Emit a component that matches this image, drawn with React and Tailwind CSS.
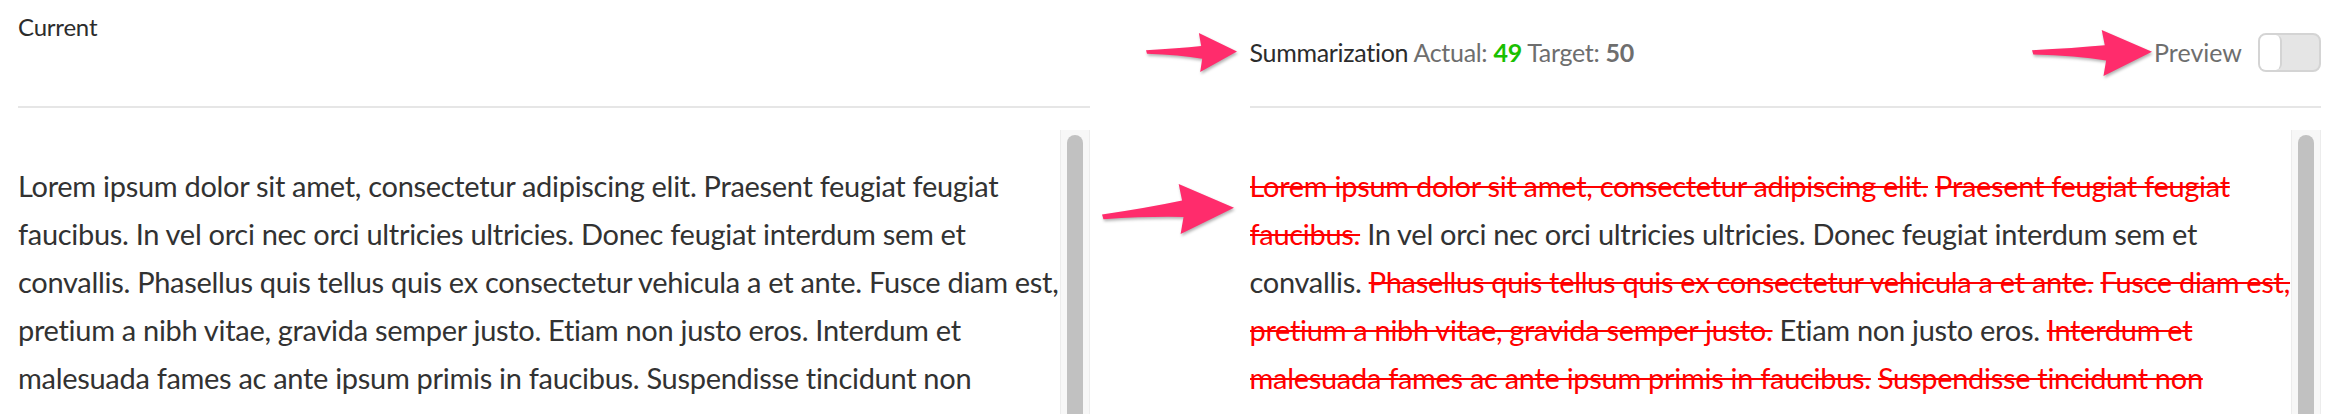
import React from "react";

const FONT = "font-['Lato','Open_Sans',sans-serif]";

const leftLines = [
    "Lorem ipsum dolor sit amet, consectetur adipiscing elit. Praesent feugiat feugiat",
    "faucibus. In vel orci nec orci ultricies ultricies. Donec feugiat interdum sem et",
    "convallis. Phasellus quis tellus quis ex consectetur vehicula a et ante. Fusce diam est,",
    "pretium a nibh vitae, gravida semper justo. Etiam non justo eros. Interdum et",
    "malesuada fames ac ante ipsum primis in faucibus. Suspendisse tincidunt non",
];

// each line: list of [text, removed]
const rightLines = [
    [["Lorem ipsum dolor sit amet, consectetur adipiscing elit.", true], [" ", false], ["Praesent feugiat feugiat", true]],
    [["faucibus.", true], [" In vel orci nec orci ultricies ultricies. Donec feugiat interdum sem et", false]],
    [["convallis. ", false], ["Phasellus quis tellus quis ex consectetur vehicula a et ante.", true], [" ", false], ["Fusce diam est,", true]],
    [["pretium a nibh vitae, gravida semper justo.", true], [" Etiam non justo eros. ", false], ["Interdum et", true]],
    [["malesuada fames ac ante ipsum primis in faucibus.", true], [" ", false], ["Suspendisse tincidunt non", true]],
];

const Arrow = ({ className, drop = 0 }) => (
    <svg
        className={`pointer-events-none absolute drop-shadow-[1px_2px_1.5px_rgba(0,0,0,0.3)] ${className}`}
        viewBox="0 0 272 118"
        preserveAspectRatio="none"
    >
        <path
            d={`M0 ${52 + drop} Q95 ${46 + drop / 2} 165 39 L158 0 L272 56 L162 118 L168 78 Q100 ${66 + drop / 2} 3 ${63 + drop} Z`}
            fill="#ff2c6c"
        />
    </svg>
);

const Scrollbar = () => (
    <div className="w-[30px] shrink-0 border-x border-[#ececec] bg-[#f7f7f7] pt-[5px]">
        <div className="mx-auto h-[400px] w-[16px] rounded-full bg-[#c1c1c1]" />
    </div>
);

const Toggle = () => (
    <div className="flex h-[39px] w-[63px] rounded-[8px] border-2 border-[#d4d4d4] bg-[#e5e5e5]">
        <div className="h-full w-[22px] rounded-[6px] border-r-2 border-[#d4d4d4] bg-white" />
    </div>
);

export default function App() {
    return (
        <div className={`relative flex h-[414px] gap-[160px] overflow-hidden bg-white pl-[18px] pr-[15px] ${FONT}`}>
            {/* current */}
            <div className="flex min-w-0 flex-1 flex-col">
                <div className="h-[106px] pt-[8px] text-[24px] leading-[38px] tracking-[-0.2px] text-[#2c2c2c]">Current</div>
                <div className="h-[2px] bg-[#e6e6e6]" />
                <div className="mt-[22px] flex min-h-0 flex-1">
                    <div className="min-w-0 flex-1 overflow-hidden pt-[32px] text-[29px] leading-[48px] tracking-[-0.3px] text-[#323232]">
                        {leftLines.map((l) => (
                            <div key={l} className="whitespace-nowrap">{l}</div>
                        ))}
                    </div>
                    <Scrollbar />
                </div>
            </div>

            {/* summarized */}
            <div className="flex min-w-0 flex-1 flex-col">
                <div className="flex h-[106px] items-start justify-between pt-[33px]">
                    <div className="text-[25px] leading-[39px] tracking-[-0.3px] text-[#6e6e6e]">
                        <span className="text-[#2c2c2c]">Summarization</span> Actual:{" "}
                        <span className="font-bold text-[#19c000]">49</span> Target:{" "}
                        <span className="font-bold">50</span>
                    </div>
                    <div className="flex items-center gap-[16px]">
                        <span className="text-[25px] leading-[39px] text-[#6e6e6e]">Preview</span>
                        <Toggle />
                    </div>
                </div>
                <div className="h-[2px] bg-[#e6e6e6]" />
                <div className="mt-[22px] flex min-h-0 flex-1">
                    <div className="min-w-0 flex-1 overflow-hidden pt-[32px] text-[29px] leading-[48px] tracking-[-0.3px] text-[#323232]">
                        {rightLines.map((parts, i) => (
                            <div key={i} className="whitespace-pre">
                                {parts.map(([t, removed], j) =>
                                    removed ? (
                                        <span key={j} className="text-[#ff0000] line-through decoration-2">{t}</span>
                                    ) : (
                                        <span key={j}>{t}</span>
                                    )
                                )}
                            </div>
                        ))}
                    </div>
                    <Scrollbar />
                </div>
            </div>

            <Arrow className="left-[1146px] top-[33px] h-[39px] w-[91px]" />
            <Arrow className="left-[2032px] top-[30px] h-[46px] w-[120px]" />
            <Arrow className="left-[1102px] top-[184px] h-[50px] w-[132px]" drop={20} />
        </div>
    );
}
